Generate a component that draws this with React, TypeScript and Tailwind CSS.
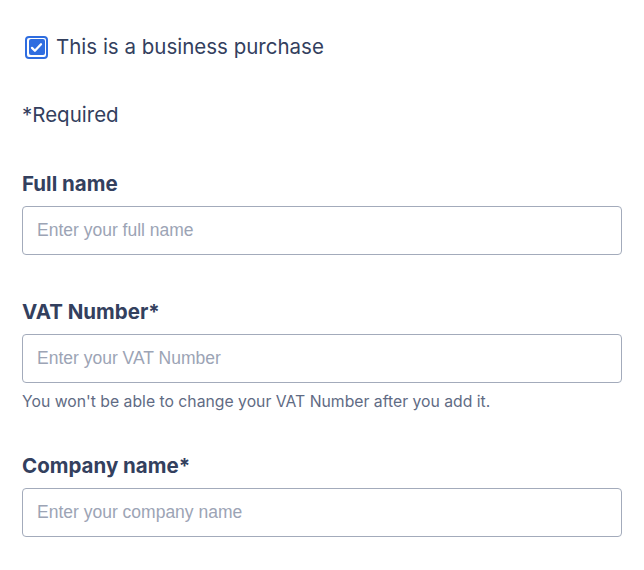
import React, { useState } from "react";

const sans = "font-['Inter','Noto_Sans',sans-serif]";

function Field({
  label,
  placeholder,
  help,
  className = "",
}: {
  label: string;
  placeholder: string;
  help?: string;
  className?: string;
}) {
  return (
    <div className={`flex flex-col ${className}`}>
      <label className={`${sans} text-[20.5px] font-bold leading-[28px] text-[#33405e]`}>
        {label}
      </label>
      <input
        placeholder={placeholder}
        className="mt-[8px] h-[49px] w-full rounded-[4px] border border-[#a3abbb] bg-white px-[14px] font-['Liberation_Sans',Arial,sans-serif] text-[17.5px] text-[#33405e] outline-none placeholder:text-[#9ca4b5]"
      />
      {help && (
        <p className={`${sans} mt-[9px] text-[15.75px] leading-[20px] text-[#5f6b84]`}>
          {help}
        </p>
      )}
    </div>
  );
}

export default function App() {
  const [checked, setChecked] = useState(true);

  return (
    <div className="min-h-[570px] w-[644px] bg-white px-[22px] pt-[33px]">
      <label className="flex cursor-pointer items-center gap-[8px]">
        <button
          type="button"
          onClick={() => setChecked(!checked)}
          className="ml-[3px] flex h-[23px] w-[23px] items-center justify-center rounded-[4px] border-[2px] border-[#2f6de0] bg-white p-[1.5px]"
        >
          <span className="flex h-full w-full items-center justify-center rounded-[2px] bg-[#2f6de0]">
            {checked && (
              <svg viewBox="0 0 16 16" className="h-[15px] w-[15px]">
                <path
                  d="M3.2 8.4l3.1 3.1 6.5-7"
                  fill="none"
                  stroke="white"
                  strokeWidth="2.4"
                  strokeLinecap="round"
                  strokeLinejoin="round"
                />
              </svg>
            )}
          </span>
        </button>
        <span className={`${sans} text-[20.5px] leading-[28px] text-[#33405e]`}>
          This is a business purchase
        </span>
      </label>

      <p className={`${sans} mt-[40px] text-[20.5px] leading-[28px] text-[#33405e]`}>*Required</p>

      <Field className="mt-[41px]" label="Full name" placeholder="Enter your full name" />
      <Field
        className="mt-[43px]"
        label="VAT Number*"
        placeholder="Enter your VAT Number"
        help="You won't be able to change your VAT Number after you add it."
      />
      <Field className="mt-[40px]" label="Company name*" placeholder="Enter your company name" />
    </div>
  );
}
